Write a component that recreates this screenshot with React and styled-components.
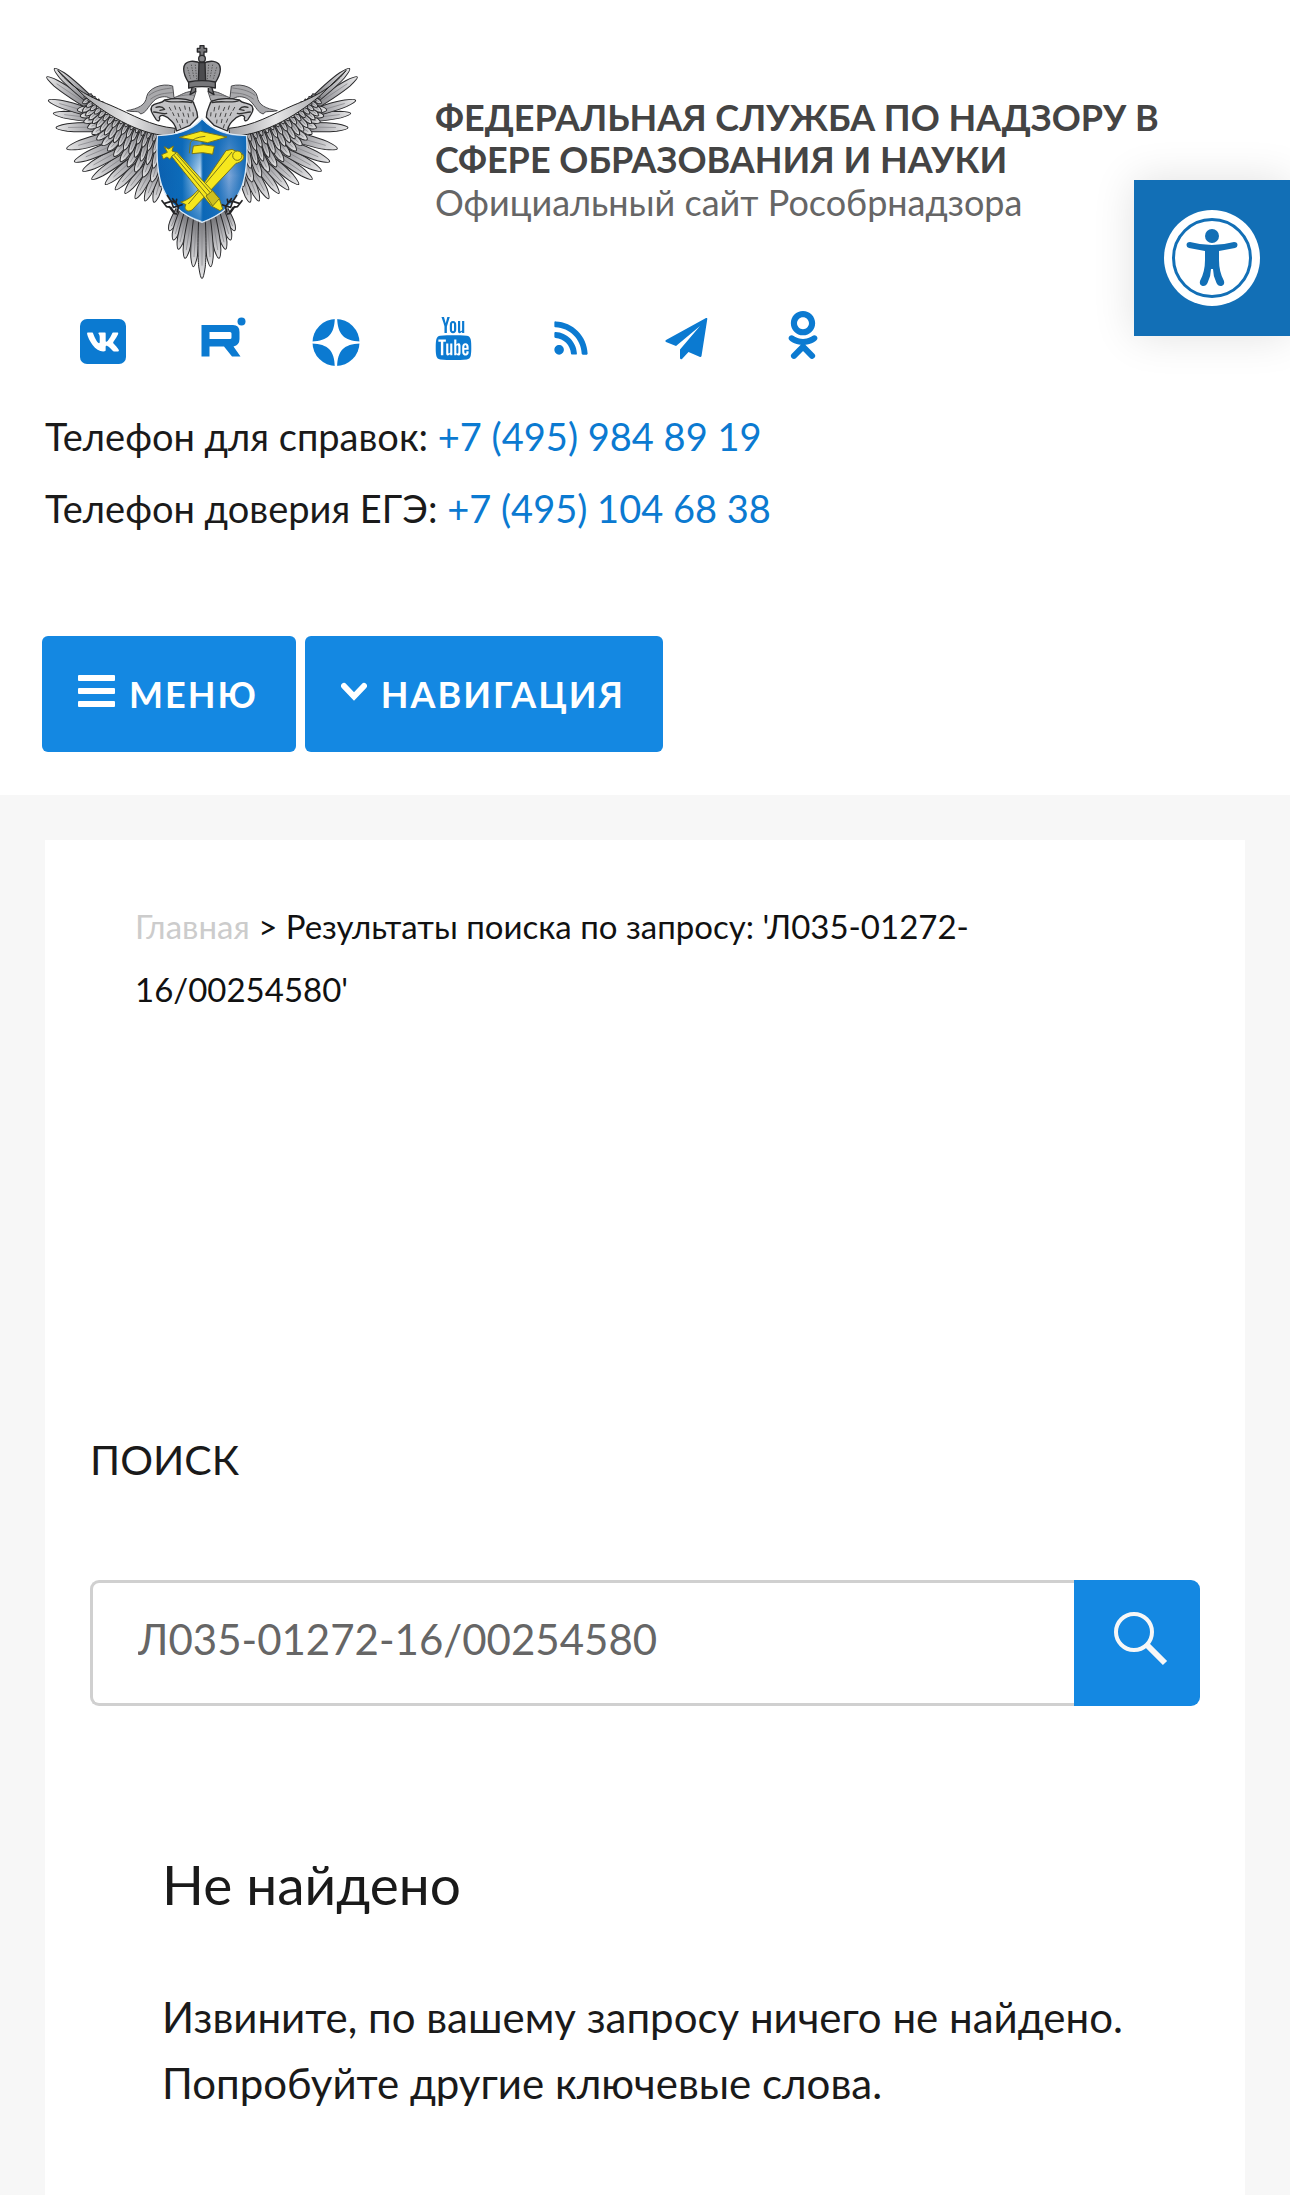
import React from 'react';
import styled, { createGlobalStyle } from 'styled-components';
import { FaVk, FaRss, FaOdnoklassniki } from 'react-icons/fa';
import { TfiYoutube } from 'react-icons/tfi';

const BLUE = '#1488e2';
const LINK = '#0b7ad1';
const TEXT = '#1a1a1a';

const GlobalStyle = createGlobalStyle`
  * {
    box-sizing: border-box;
  }

  body {
    margin: 0;
    background: #f7f7f7;
    color: ${TEXT};
    font-family: Lato, 'Open Sans', sans-serif;
  }

  h1, h2, p {
    margin: 0;
    font-weight: 400;
  }

  a {
    color: ${LINK};
    text-decoration: none;
  }
`;

const Header = styled.header`
  padding: 44px 45px 43px;
  background: #fff;
`;

const Brand = styled.div`
  display: flex;
  align-items: center;
  gap: 75px;
`;

const Logo = styled.svg`
  flex: none;
  width: 315px;
  height: 240px;
`;

const BrandText = styled.div`
  max-width: 740px;
  padding-bottom: 8px;
`;

const SiteName = styled.div`
  color: #444;
  font-size: 36px;
  font-weight: 700;
  line-height: 42px;
`;

const Tagline = styled.div`
  color: #666;
  font-size: 36px;
  line-height: 44px;
`;

const Socials = styled.nav`
  display: grid;
  grid-template-columns: repeat(7, 1fr);
  justify-items: center;
  max-width: 816px;
  margin-top: 30px;
`;

const SocialLink = styled.a`
  display: block;
  height: 52px;
`;

const SocialIcon = styled.svg`
  display: block;
  width: 52px;
  height: 52px;
  overflow: visible;
  fill: currentColor;
`;

const Phones = styled.div`
  margin-top: 34px;
  font-size: 38px;
  line-height: 72px;
`;

const Buttons = styled.div`
  display: flex;
  gap: 9px;
  margin: 92px -3px 0;
`;

const HeaderButton = styled.button`
  display: flex;
  align-items: center;
  gap: 14px;
  height: 116px;
  padding: 0 38px 0 36px;
  border: none;
  border-radius: 6px;
  background: ${BLUE};
  color: #fff;
  font: 700 36px/48px Lato, 'Open Sans', sans-serif;
  letter-spacing: 2px;
`;

const ButtonIcon = styled.svg`
  width: ${props => props.width}px;
  height: 38px;
`;

const Accessibility = styled.button`
  position: fixed;
  top: 180px;
  right: 0;
  display: flex;
  align-items: center;
  justify-content: center;
  width: 156px;
  height: 156px;
  padding: 0;
  border: none;
  background: #126fb6;
  box-shadow: 0 0 40px rgba(0, 0, 0, 0.12);
`;

const Card = styled.main`
  min-height: 1400px;
  margin: 45px 45px 0;
  padding: 55px 45px;
  background: #fff;
`;

const Breadcrumbs = styled.nav`
  padding: 0 45px;
  color: #111;
  font-size: 33px;
  line-height: 63px;

  a {
    color: #ccc;
  }
`;

const SearchTitle = styled.h2`
  margin-top: 409px;
  font-size: 41px;
  line-height: 60px;
`;

const SearchForm = styled.form`
  display: flex;
  margin-top: 90px;
`;

const SearchInput = styled.input`
  flex: 1;
  min-width: 0;
  height: 126px;
  padding: 0 45px 8px;
  border: 3px solid #d0d0d0;
  border-right: none;
  border-radius: 9px 0 0 9px;
  outline: none;
  background: #fff;
  color: #666;
  font: 400 42px Lato, 'Open Sans', sans-serif;
`;

const SearchButton = styled.button`
  display: flex;
  align-items: center;
  justify-content: center;
  width: 126px;
  height: 126px;
  padding: 0 0 8px 8px;
  border: none;
  border-radius: 0 9px 9px 0;
  background: ${BLUE};
`;

const Result = styled.section`
  padding: 138px 72px 0;
`;

const ResultTitle = styled.h1`
  font-size: 55px;
  line-height: 80px;
`;

const ResultText = styled.p`
  margin-top: 60px;
  font-size: 42px;
  line-height: 66px;
`;

// long feathers of one wing: root x, root y, tip x, tip y, width
const PRIMARIES = [
  [405, 400, 372, 517, 25],
  [395, 390, 345, 513, 25],
  [385, 380, 316, 506, 26],
  [375, 370, 285, 490, 26],
  [365, 360, 256, 479, 27],
  [352, 350, 226, 463, 28],
  [340, 340, 185, 448, 28],
  [325, 330, 158, 423, 30],
  [310, 320, 133, 395, 31],
  [290, 305, 110, 356, 33],
  [265, 290, 78, 293, 30],
  [240, 270, 70, 250, 27],
  [225, 260, 55, 211, 28],
  [205, 245, 50, 141, 27],
  [200, 228, 73, 116, 28],
];

const TAIL = [
  [450, 530, 418, 602, 22],
  [460, 535, 430, 630, 24],
  [472, 545, 445, 658, 24],
  [485, 555, 465, 685, 25],
  [500, 560, 490, 710, 25],
];

const mix = (a, b, t) => a + (b - a) * t;
const curve = ([x0, y0, x1, y1, x2, y2], t) => [
  mix(mix(x0, x1, t), mix(x1, x2, t), t),
  mix(mix(y0, y1, t), mix(y1, y2, t), t),
];

// a row of short feathers between two quadratic curves
const row = (count, roots, tips, width) =>
  Array.from({ length: count }, (_, i) => {
    const t = 1 - i / (count - 1);
    return [...curve(roots, t), ...curve(tips, t), width];
  });

const COVERTS = [
  ...row(15, [210, 235, 260, 300, 410, 390], [142, 240, 200, 370, 392, 470], 23),
  ...row(17, [200, 215, 260, 280, 405, 350], [158, 245, 230, 340, 390, 425], 18),
  ...row(17, [190, 200, 270, 265, 405, 320], [158, 220, 250, 305, 388, 380], 15),
  ...row(16, [185, 195, 270, 255, 400, 300], [162, 203, 250, 280, 388, 342], 12),
];

const Feather = ({ data: [x1, y1, x2, y2, w] }) => {
  const length = Math.hypot(x2 - x1, y2 - y1);
  const angle = Math.atan2(y2 - y1, x2 - x1) * 180 / Math.PI;
  const h = w / 2;
  return (
    <g transform={`translate(${x1} ${y1}) rotate(${angle})`}>
      <path
        d={`M0 ${-h * 0.7} C${length * 0.4} ${-h} ${length * 0.65} ${-h} ${length * 0.82} ${-h * 0.75}
          Q${length} ${-h * 0.35} ${length} 0 Q${length} ${h * 0.35} ${length * 0.82} ${h * 0.75}
          C${length * 0.65} ${h} ${length * 0.4} ${h} 0 ${h * 0.7}Z`}
        fill="url(#feather)"
        stroke="#2a2a2c"
        strokeWidth="3"
      />
      <path d={`M0 0 H${length * 0.8}`} stroke="#828286" strokeWidth="2" />
    </g>
  );
};

const HalfEagle = () => (
  <g fill="none" strokeLinejoin="round" strokeLinecap="round">
    {PRIMARIES.map((data, i) => <Feather key={i} data={data} />)}
    {COVERTS.map((data, i) => <Feather key={i} data={data} />)}
    <path
      d="M84 122 C130 180 190 205 240 225 C310 255 360 288 436 295 L432 318 C340 320 240 262 165 200Z"
      fill="url(#arm)" stroke="#222" strokeWidth="3"
    />
    {TAIL.map((data, i) => <Feather key={i} data={data} />)}
    <path
      d="M497 184 C465 182 455 196 432 203 L428 168 C395 158 355 175 350 200 C347 225 325 236 290 242
        C315 248 325 240 332 252 C350 247 352 232 372 212 C385 200 408 196 420 205 L488 212Z"
      fill="#a9a9ac" stroke="#4b4b4e" strokeWidth="3"
    />
    <path d="M357 196 C380 178 405 177 424 174 M362 207 C385 190 405 190 427 188 M440 200 C460 196 475 192 494 196" stroke="#67676a" strokeWidth="2" />
    <path
      d="M440 303 C436 282 428 276 412 262 C400 256 392 252 388 262 C392 270 386 277 378 268
        C368 252 358 240 366 228 C376 217 395 222 404 210 C436 204 470 206 490 216 C493 230 503 240 503 262 L480 286Z"
      fill="#c2c2c5" stroke="#2a2a2c" strokeWidth="4"
    />
    <path d="M404 211 C428 222 455 210 486 218 M378 232 C390 228 398 230 404 238 L390 241 M371 246 C385 246 398 255 410 250" stroke="#333" strokeWidth="4" />
    <path
      d="M418 232 l5 9 M434 228 l3 10 M448 232 l4 10 M464 228 l2 10 M478 232 l2 11 M428 248 l4 9 M444 250 l3 10
        M459 249 l3 10 M474 251 l2 10 M489 248 l1 10 M439 267 l4 10 M456 268 l2 10 M471 270 l1 9 M449 284 l3 9"
      stroke="#444" strokeWidth="3"
    />
  </g>
);

const Claws = () => (
  <path
    d="M396 512 l14 18 l12 2 l10 14 M404 520 l20 -6 l6 18 l16 -4 l-4 18 M412 496 l10 16 l16 6 l2 -10 M418 530 l14 20 l8 2 M428 506 l16 22 l12 -4"
    fill="none" stroke="#222224" strokeWidth="5" strokeLinejoin="round" strokeLinecap="round"
  />
);

const Emblem = () => (
  <Logo viewBox="45 42 945 720" role="img" aria-label="Рособрнадзор">
    <defs>
      <linearGradient id="feather">
        <stop offset="0" stopColor="#6a6a6e" />
        <stop offset="0.5" stopColor="#a8a8ac" />
        <stop offset="1" stopColor="#e8e8e9" />
      </linearGradient>
      <linearGradient id="arm">
        <stop offset="0" stopColor="#8a8a8d" />
        <stop offset="0.6" stopColor="#e6e6e7" />
        <stop offset="1" stopColor="#a0a0a3" />
      </linearGradient>
      <linearGradient id="shield">
        <stop offset="0" stopColor="#0b5fae" />
        <stop offset="0.28" stopColor="#0d6cba" />
        <stop offset="0.48" stopColor="#c4def4" />
        <stop offset="0.51" stopColor="#0b66b4" />
        <stop offset="0.68" stopColor="#2b78c0" />
        <stop offset="0.8" stopColor="#7ea6d8" />
        <stop offset="1" stopColor="#0b66b4" />
      </linearGradient>
      <linearGradient id="shade" x1="0" y1="0" x2="0" y2="1">
        <stop offset="0" stopColor="#0b68b8" />
        <stop offset="0.3" stopColor="#0b68b8" stopOpacity="0.5" />
        <stop offset="0.55" stopColor="#0b68b8" stopOpacity="0" />
        <stop offset="1" stopColor="#0b68b8" stopOpacity="0.8" />
      </linearGradient>
    </defs>
    <HalfEagle />
    <g transform="translate(1032 0) scale(-1 1)"><HalfEagle /></g>
    <Feather data={[516, 550, 516, 746, 26]} />
    <g stroke="#2a2a2c" strokeWidth="4" strokeLinejoin="round">
      <path d="M476 158 C458 130 452 98 482 94 Q500 92 516 102 Q532 92 550 94 C580 98 574 130 556 158Z" fill="#97979a" />
      <path d="M505 156 L507 98 H525 L527 156Z" fill="#4b4b4e" />
      <path d="M476 156 Q516 148 556 156 V174 Q516 166 476 174Z" fill="#77777a" />
      <path d="M486 174 L480 194 L497 184 V174 M546 174 L552 194 L535 184 V174" fill="#77777a" />
      <circle cx="516" cy="86" r="10" fill="#88888b" />
      <path d="M510 76 V66 H502 V55 H510 V47 H522 V55 H530 V66 H522 V76Z" fill="#77777a" />
    </g>
    <path d="M472 112 l10 34 M484 104 l8 40 M496 104 l4 44 M536 104 l-4 44 M548 104 l-8 40 M560 112 l-10 34" stroke="#555" strokeWidth="3" strokeDasharray="4 4" />
    <path
      d="M516 266 C480 304 440 315 382 317 C376 440 388 530 516 577 C644 530 656 440 650 317 C592 315 552 304 516 266Z"
      fill="url(#shield)" stroke="#dbe9f5" strokeWidth="4"
    />
    <path d="M516 270 C480 307 440 318 385 320 C379 440 391 528 516 573 C641 528 653 440 647 320 C592 318 552 307 516 270Z" fill="url(#shade)" />
    <Claws />
    <g transform="translate(1032 0) scale(-1 1)"><Claws /></g>
    <g fill="#f6e71d" stroke="#77741b" strokeWidth="3" strokeLinejoin="round">
      <path d="M448 322 L512 304 L591 321 L533 338Z" />
      <path d="M526 319 Q490 322 481 338 L478 370" fill="none" />
      <path d="M490 348 Q520 340 553 349 L548 373 Q520 364 486 371Z" />
      <path d="M588 362 L606 358 L640 374 C646 388 630 398 618 400 L486 540 C470 550 460 534 468 524 L452 516 C480 510 500 485 520 462Z" />
      <path d="M606 366 L475 522" fill="none" />
      <circle cx="622" cy="377" r="14" />
      <path d="M424 378 L440 366 L568 506 L578 537 L570 542 L544 528Z" />
      <path d="M432 376 L553 520 M440 372 L560 510" fill="none" />
      <path d="M528 498 L548 482 L568 506 L548 528Z" fill="#cdbf1e" />
      <path d="M395 374 L412 367 L403 350 L416 357 L430 348 L426 363 L440 368 L426 378 L420 388 L411 381 L400 387Z" />
    </g>
  </Logo>
);

const SOCIALS = [
  {
    name: 'ВКонтакте',
    icon: (
      <>
        <rect x="3" y="5" width="46" height="45" rx="7" />
        <FaVk x="9" y="11" size={34} color="#fff" />
      </>
    ),
  },
  {
    name: 'Rutube',
    icon: (
      <>
        <path
          fillRule="evenodd"
          d="M7.5 11H39Q45.5 11 45.5 18V25Q45.5 31 39.5 32.5L46.5 42.5H38L30 32.5H15.5V42.5H7.5Z
            M15.5 18V25H36Q37.5 25 37.5 23.5V19.5Q37.5 18 36 18Z"
        />
        <circle cx="47.5" cy="7.5" r="4" />
      </>
    ),
  },
  {
    name: 'Дзен',
    icon: (
      <>
        <circle cx="26" cy="28.5" r="23.5" />
        <path
          fill="#fff"
          d="M24.8 4C24.6 20 18 27 2 27.4V29.6C18 30 24.6 37 24.8 53H27.2C27.4 37 34 30 50 29.6V27.4C34 27 27.4 20 27.2 4Z"
        />
      </>
    ),
  },
  {
    name: 'YouTube',
    icon: <TfiYoutube x="5" y="3" size={43} />,
  },
  {
    name: 'RSS',
    icon: <FaRss x="8" y="5" size={38} />,
  },
  {
    name: 'Telegram',
    icon: (
      <path
        d="M46 4Q47.5 3.5 47.3 5L41.5 42Q41 43.5 39.5 42.7L28.5 38L22 45Q20.3 46 20 44V35.500L40 12L16 32L6 28Q4.5 27 6 26Z"
      />
    ),
  },
  {
    name: 'Одноклассники',
    icon: <FaOdnoklassniki x="2" y="-3" size={48} />,
  },
];

const App = () => (
  <>
    <GlobalStyle />
    <Header>
      <Brand>
        <Emblem />
        <BrandText>
          <SiteName>ФЕДЕРАЛЬНАЯ СЛУЖБА ПО НАДЗОРУ В СФЕРЕ ОБРАЗОВАНИЯ И НАУКИ</SiteName>
          <Tagline>Официальный сайт Рособрнадзора</Tagline>
        </BrandText>
      </Brand>
      <Socials>
        {SOCIALS.map(({ name, icon }) =>
          <SocialLink key={name} href="#" aria-label={name}>
            <SocialIcon viewBox="0 0 52 52">{icon}</SocialIcon>
          </SocialLink>
        )}
      </Socials>
      <Phones>
        <p>Телефон для справок: <a href="tel:+74959848919">+7 (495) 984 89 19</a></p>
        <p>Телефон доверия ЕГЭ: <a href="tel:+74951046838">+7 (495) 104 68 38</a></p>
      </Phones>
      <Buttons>
        <HeaderButton type="button">
          <ButtonIcon width={37} viewBox="0 0 37 38" fill="#fff">
            <rect width="37" height="6" rx="1" />
            <rect y="13" width="37" height="6" rx="1" />
            <rect y="26" width="37" height="6" rx="1" />
          </ButtonIcon>
          МЕНЮ
        </HeaderButton>
        <HeaderButton type="button">
          <ButtonIcon width={26} viewBox="0 0 26 38" fill="none">
            <path d="M3 11L13 21.5L23 11" stroke="#fff" strokeWidth="6" strokeLinecap="round" />
          </ButtonIcon>
          НАВИГАЦИЯ
        </HeaderButton>
      </Buttons>
    </Header>
    <Accessibility type="button" aria-label="Специальные возможности">
      <svg width="96" height="96" viewBox="0 0 96 96">
        <circle cx="48" cy="48" r="48" fill="#fff" />
        <circle cx="48" cy="48" r="38.5" fill="none" stroke="#126fb6" strokeWidth="3" />
        <circle cx="48" cy="26" r="7" fill="#126fb6" />
        <path
          d="M26 32Q22.500 32 22.500 35Q22.500 37.500 25 38L41 41V50Q41 62 36 71Q35 75 38.500 76Q42 76.500 43.500 73
            Q47 66 47 59H49Q49 66 52.500 73Q54 76.500 57.500 76Q61 75 60 71Q55 62 55 50V41L71 38Q73.500 37.500 73.500 35Q73.500 32 70 32Q48 38 26 32Z"
          fill="#126fb6"
        />
      </svg>
    </Accessibility>
    <Card>
      <Breadcrumbs>
        <a href="#">Главная</a> &gt; Результаты поиска по запросу: 'Л035-01272-<wbr />16/00254580'
      </Breadcrumbs>
      <SearchTitle>ПОИСК</SearchTitle>
      <SearchForm onSubmit={(e) => e.preventDefault()}>
        <SearchInput type="text" aria-label="Поиск" defaultValue="Л035-01272-16/00254580" />
        <SearchButton type="submit" aria-label="Найти">
          <svg width="54" height="54" viewBox="0 0 54 54" fill="none" stroke="#f7f7f7">
            <circle cx="20" cy="20" r="18" strokeWidth="4" />
            <path d="M33 33L51 51" strokeWidth="6" />
          </svg>
        </SearchButton>
      </SearchForm>
      <Result>
        <ResultTitle>Не найдено</ResultTitle>
        <ResultText>
          Извините, по вашему запросу ничего не найдено. Попробуйте другие ключевые слова.
        </ResultText>
      </Result>
    </Card>
  </>
);

export default App;
